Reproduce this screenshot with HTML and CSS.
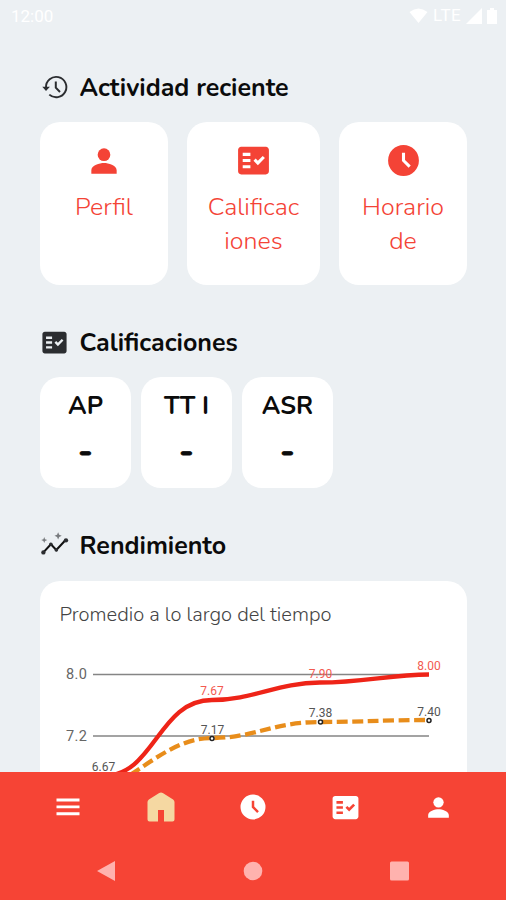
FILE: index.html
```html
<!DOCTYPE html>
<html lang="es">
<head>
<meta charset="utf-8">
<meta name="viewport" content="width=device-width, initial-scale=1">
<title>Inicio</title>
<link rel="stylesheet" href="styles.css">
</head>
<body>
<svg class="defs" aria-hidden="true">
  <symbol id="person" viewBox="0 0 24 24"><circle cx="12" cy="8" r="4"/><path d="M12 13.300c-2.700 0-8 1.340-8 4.500V20h16v-2.200c0-3.160-5.330-4.500-8-4.500z"/></symbol>
  <symbol id="check" viewBox="0 0 24 24"><path fill-rule="evenodd" d="M20 3H4c-1.100 0-2 .9-2 2v14c0 1.100.9 2 2 2h16c1.100 0 2-.9 2-2V5c0-1.100-.9-2-2-2zM10 17H5v-2h5v2zm0-4H5v-2h5v2zm0-4H5V7h5v2zm4.820 6L12 12.160l1.410-1.410 1.410 1.420L17.990 9l1.420 1.420L14.820 15z"/></symbol>
  <symbol id="clock" viewBox="0 0 24 24"><path fill-rule="evenodd" d="M12 2a10 10 0 1 0 0 20a10 10 0 0 0 0-20zM15.300 16.700L11 12.400V7h2v4.600l3.700 3.700z"/></symbol>
</svg>
<div class="screen">
  <header class="status">
    <span>12:00</span>
    <div class="signals">
      <svg width="19" height="16" viewBox="0 0 19 16"><path d="M.5 4Q9.500-3 18.500 4L9.500 15z"/></svg>
      <span class="lte">LTE</span>
      <svg width="16" height="16" viewBox="0 0 16 16"><path d="M16 0v16H0z"/></svg>
      <svg width="10" height="16" viewBox="0 0 10 16"><path d="M3 0h4v2h3v14H0V2h3z"/></svg>
    </div>
  </header>
  <main class="content">
    <section>
      <h2 class="title"><svg class="hicon" viewBox="0 0 29 29"><path d="M6 14.500A10.200 10.200 0 1 1 9.300 21.600" fill="none" stroke="currentColor" stroke-width="1.900"/><path d="M2.300 13.800h7.600L6 18z"/><path d="M15.800 8.500v6.200l4.200 4.300" fill="none" stroke="currentColor" stroke-width="2"/></svg><span>Actividad reciente</span></h2>
      <div class="shortcuts">
        <div class="shortcut"><svg><use href="#person"/></svg><span>Perfil</span></div>
        <div class="shortcut"><svg><use href="#check"/></svg><span>Calificac<br>iones</span></div>
        <div class="shortcut"><svg><use href="#clock"/></svg><span>Horario<br>de</span></div>
      </div>
    </section>
    <section>
      <h2 class="title"><svg class="hicon"><use href="#check"/></svg><span>Calificaciones</span></h2>
      <div class="grades">
        <div class="grade"><span>AP</span><span>-</span></div>
        <div class="grade"><span>TT I</span><span>-</span></div>
        <div class="grade"><span>ASR</span><span>-</span></div>
      </div>
    </section>
    <section>
      <h2 class="title"><svg class="hicon" viewBox="0 0 24 24"><path d="M2.800 17.700L9 11l4.500 4.700L21 7.700" fill="none" stroke="#111" stroke-width="1.700"/><circle cx="2.800" cy="17.700" r="1.800"/><circle cx="9" cy="11" r="1.500"/><circle cx="13.500" cy="15.700" r="1.500"/><circle cx="21.500" cy="7.700" r="1.800"/><path d="M15 1l.9 2.100L18 4l-2.100.9L15 7l-.9-2.100L12 4l2.100-.9zM3.500 5l.7 1.800L6 7.500l-1.800.7L3.500 10l-.7-1.800L1 7.500l1.800-.7z" opacity=".6"/></svg><span>Rendimiento</span></h2>
      <div class="performance">
        <p>Promedio a lo largo del tiempo</p>
        <svg class="chart" viewBox="40 640 427 150">
          <path class="grid" d="M93 674.500H429M93 736H429"/>
          <g class="axis"><text x="66" y="679" textLength="21">8.0</text><text x="66" y="740.500" textLength="21">7.2</text></g>
          <path class="group" d="M103 789C139 776 169 738 212 738C255 738 272 722 320 722C360 722 385 720 429 720"/>
          <path class="mine" d="M103 776C155 776 158 700 212 700C253 700 278 682.500 320 682.500C364 682.500 390 674.500 429 674.500"/>
          <g class="dots"><circle cx="212" cy="738.500" r="2"/><circle cx="320.500" cy="722" r="2"/><circle cx="429" cy="720.500" r="2"/></g>
          <g class="values"><text x="103.500" y="771">6.67</text><text x="212.500" y="733.500">7.17</text><text x="320.500" y="717">7.38</text><text x="429" y="716">7.40</text></g>
          <g class="values red"><text x="212" y="695">7.67</text><text x="320.500" y="677.500">7.90</text><text x="429" y="670">8.00</text></g>
        </svg>
      </div>
    </section>
  </main>
  <footer class="bottom">
    <nav class="tabs">
      <svg viewBox="0 0 30 30"><path d="M3.500 6.600h23v2.900h-23zm0 6.800h23v2.900h-23zm0 6.900h23v2.900h-23z"/></svg>
      <svg class="home" viewBox="0 0 30 30"><path d="M13.200.9Q15 0 16.800.9L27.100 7.500Q28.500 8.500 28.500 10V27.500Q28.500 29.500 26.500 29.500H18V18h-6v11.500H3.500Q1.500 29.500 1.500 27.500V10Q1.500 8.500 2.900 7.500z"/></svg>
      <svg><use href="#clock"/></svg>
      <svg class="tabcheck"><use href="#check"/></svg>
      <svg class="tabperson"><use href="#person"/></svg>
    </nav>
    <div class="system">
      <svg viewBox="0 0 20 20"><path d="M18 0v20L0 10z"/></svg>
      <svg viewBox="0 0 20 20"><circle cx="10" cy="10" r="9.300"/></svg>
      <svg viewBox="0 0 20 20"><rect x="0" y=".5" width="19" height="19" rx="1.500"/></svg>
    </div>
  </footer>
</div>
</body>
</html>
```
FILE: styles.css
```css
* { box-sizing: border-box; }
body { margin: 0; background: #ecf0f3; font-family: Nunito, Lato, "Open Sans", sans-serif; color: #0b0b0b; }
svg { display: block; fill: currentColor; }
.defs { display: none; }
.screen { width: 506px; height: 900px; display: flex; flex-direction: column; overflow: hidden; }
.status { height: 32px; flex: none; display: flex; justify-content: space-between; padding: 7px 9px 0 11px; color: #fff; font: 17px/19px Roboto, sans-serif; }
.signals { display: flex; gap: 5px; align-items: center; height: 17px; }
.lte { font-size: 17px; letter-spacing: .4px; }
.content { flex: 1; min-height: 0; overflow: hidden; padding: 38px 39px 0 40px; }
.title { display: flex; align-items: center; gap: 10.500px; margin: 0; height: 35px; font-size: 25px; line-height: 35px; font-weight: 700; }
.title span { white-space: nowrap; padding-top: 2px; }
.hicon { width: 29px; height: 29px; color: #2b2d30; flex: none; }
.shortcuts { display: grid; grid-template-columns: 128px 133px 128px; gap: 19px; height: 163px; margin: 17px 0 40px; }
.shortcut { background: #fff; border-radius: 20px; color: #f44336; display: flex; flex-direction: column; align-items: center; padding-top: 20px; text-align: center; font-size: 25px; line-height: 34px; font-weight: 300; }
.shortcut svg { width: 37px; height: 37px; margin-bottom: 11px; }
.shortcut:first-child svg { width: 38px; height: 38px; margin: 0 0 10px; }
.grades { display: grid; grid-template-columns: repeat(3, 91px); gap: 10px; height: 111px; margin: 17px 0 40px; }
.grade { background: #fff; border-radius: 20px; display: flex; flex-direction: column; align-items: center; gap: 11px; padding-top: 12px; font-size: 25px; line-height: 34px; font-weight: 700; }
.grade span + span { font-size: 34px; -webkit-text-stroke: .8px #0b0b0b; }
.performance { background: #fff; border-radius: 20px; height: 240px; margin-top: 18px; }
.performance p { margin: 0; padding: 20px 20px 0 19.500px; height: 59px; font-size: 20.100px; line-height: 28px; font-weight: 300; color: #444; white-space: nowrap; }
.chart { width: 427px; height: 150px; font-family: Roboto, sans-serif; }
.grid { stroke: #858585; stroke-width: 1.7; fill: none; }
.axis { font-size: 14.500px; fill: #666; }
.mine { fill: none; stroke: #ee2418; stroke-width: 4.300; }
.group { fill: none; stroke: #e88d1b; stroke-width: 4.300; stroke-dasharray: 11 4.500; }
.dots { fill: #fff; stroke: #222; stroke-width: 1.500; }
.values { fill: #555; font-size: 12px; text-anchor: middle; }
.red { fill: #f35a50; }
.bottom { height: 128px; flex: none; background: #f64435; color: #fff; }
.tabs { height: 70px; display: grid; grid-template-columns: repeat(5, 92.500px); justify-content: center; justify-items: center; align-items: center; }
.tabs svg { width: 30px; height: 30px; }
.tabs .home { color: #f5d8a2; }
.tabs .tabcheck { width: 31px; height: 31px; }
.tabs .tabperson { width: 31px; height: 31px; }
.system { display: grid; grid-template-columns: repeat(3, 146.500px); justify-content: center; justify-items: center; padding-top: 19px; color: #ffb2ae; }
.system svg { width: 20px; height: 20px; }
```
